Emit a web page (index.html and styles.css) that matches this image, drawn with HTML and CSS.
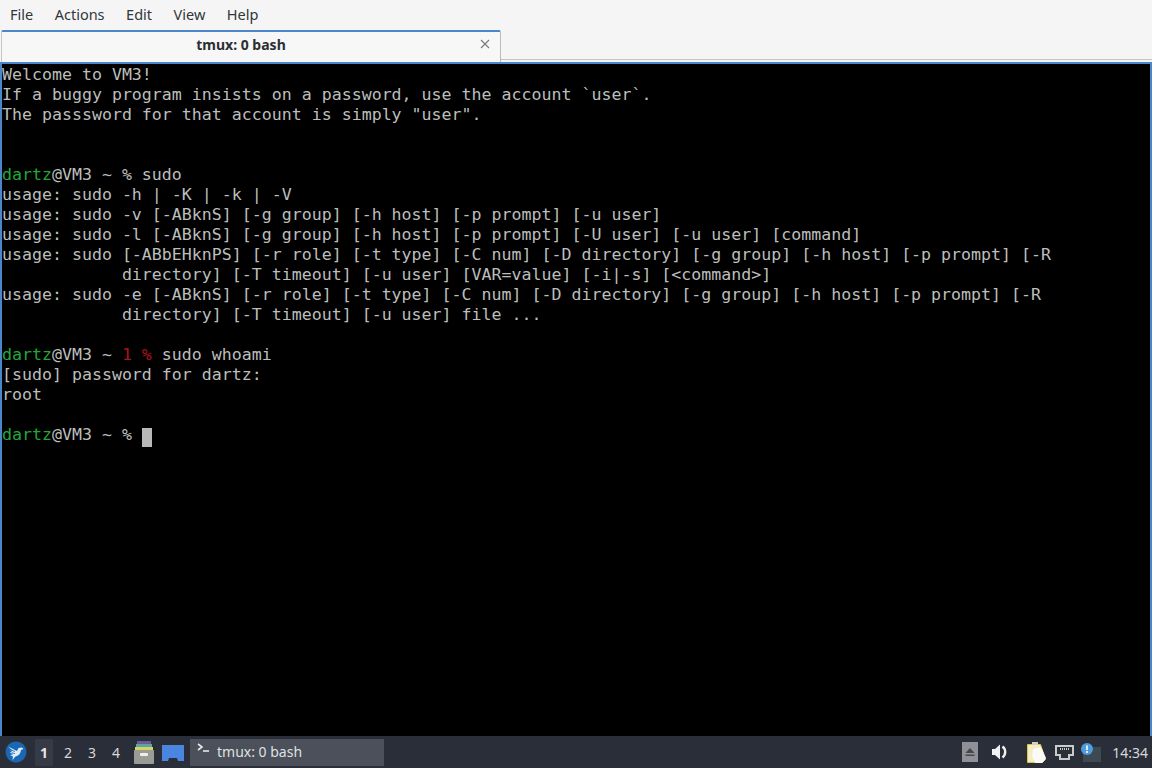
FILE: index.html
```html
<!DOCTYPE html>
<html lang="en">
<head>
<meta charset="utf-8">
<title>tmux: 0 bash</title>
<link rel="stylesheet" href="styles.css">
</head>
<body>
<div class="window">
  <nav class="menubar">
    <span class="menu-item">File</span>
    <span class="menu-item">Actions</span>
    <span class="menu-item">Edit</span>
    <span class="menu-item">View</span>
    <span class="menu-item">Help</span>
  </nav>
  <div class="tabbar">
    <div class="tab">
      <span class="tab-title">tmux: 0 bash</span>
      <svg class="tab-close" width="10" height="10" viewBox="0 0 10 10"><path d="M1 1l8 8M9 1l-8 8" stroke="#77797b" stroke-width="1.1" fill="none"/></svg>
    </div>
    <div class="tab-rest"></div>
  </div>
  <main class="terminal"><pre class="screen">Welcome to VM3!
If a buggy program insists on a password, use the account `user`.
The passsword for that account is simply "user".


<span class="green">dartz</span>@VM3 ~ % sudo
usage: sudo -h | -K | -k | -V
usage: sudo -v [-ABknS] [-g group] [-h host] [-p prompt] [-u user]
usage: sudo -l [-ABknS] [-g group] [-h host] [-p prompt] [-U user] [-u user] [command]
usage: sudo [-ABbEHknPS] [-r role] [-t type] [-C num] [-D directory] [-g group] [-h host] [-p prompt] [-R
            directory] [-T timeout] [-u user] [VAR=value] [-i|-s] [&lt;command&gt;]
usage: sudo -e [-ABknS] [-r role] [-t type] [-C num] [-D directory] [-g group] [-h host] [-p prompt] [-R
            directory] [-T timeout] [-u user] file ...

<span class="green">dartz</span>@VM3 ~ <span class="red">1 %</span> sudo whoami
[sudo] password for dartz:
root

<span class="green">dartz</span>@VM3 ~ % <span class="cursor"> </span></pre></main>
</div>
<footer class="taskbar">
  <svg class="logo" width="24" height="24" viewBox="0 0 24 24">
    <circle cx="12" cy="12" r="10.500" fill="#1a68b4"/>
    <path d="M4 6.500l6 3 3 1.500 1.500-3 3.500-.5 1.500 1.500-2.500 1c-.5 4-2.500 6-5.500 6.500l-3 3.500 .5-3.500-3-1.500 3-.5-3.500-2.500 3.500 .5-3-2 3 .5z" fill="#dcebf7"/>
    <path d="M7 10l4 1.500M8 13l3 .5" stroke="#1a68b4" stroke-width=".8"/>
  </svg>
  <div class="pager">
    <span class="desk active">1</span>
    <span class="desk">2</span>
    <span class="desk">3</span>
    <span class="desk">4</span>
  </div>
  <svg class="cabinet" width="20" height="23" viewBox="0 0 20 23">
    <path d="M3 0h14v5H3z" fill="#6a5a9c"/>
    <path d="M2 3h16v4H2z" fill="#5aa6a0"/>
    <path d="M1 6h18v4H1z" fill="#d8d264"/>
    <rect x="0" y="9" width="20" height="14" rx="1" fill="#9c9c96"/>
    <rect x="6" y="12" width="8" height="3" rx="1" fill="#eeeeea"/>
  </svg>
  <svg class="folder" width="22" height="16" viewBox="0 0 22 16">
    <path d="M0 0h22v16h-6l-1-3H7l-1 3H0z" fill="#4a86e0"/>
  </svg>
  <div class="task">
    <svg class="task-icon" width="14" height="12" viewBox="0 0 14 12"><path d="M1 1l4 3-4 3" stroke="#e6e8ea" stroke-width="1.600" fill="none"/><path d="M6 8h6" stroke="#e6e8ea" stroke-width="1.600"/></svg>
    <span>tmux: 0 bash</span>
  </div>
  <div class="tray">
    <span class="eject"><svg width="16" height="20" viewBox="0 0 16 20"><path d="M8 6l4.500 5h-9z" fill="#44474c"/><path d="M3.500 12.500h9v1.500h-9z" fill="#44474c"/></svg></span>
    <svg class="speaker" width="18" height="18" viewBox="0 0 18 18"><path d="M1 6h3l5-4.500v15L4 12H1z" fill="#f2f2f2"/><path d="M11.500 3.500a7 7 0 0 1 0 11" stroke="#f2f2f2" stroke-width="2.400" fill="none"/></svg>
    <svg class="clip" width="20" height="21" viewBox="0 0 20 21"><path d="M.5 2.500h13l5 15-3 3H.5z" fill="#f3ecc4" stroke="#d8c93c"/><path d="M5 0h6v3H5z" fill="#cfcfc6"/><path d="M6 7l8-2 5 11-4 5H8l-3-7z" fill="#fafaf6"/></svg>
    <svg class="net" width="19" height="15" viewBox="0 0 19 15"><path d="M1 1h17v9h-4v4H5v-4H1z" fill="#2b2f36" stroke="#c8cacb" stroke-width="2"/><path d="M5 4h9" stroke="#c8cacb" stroke-dasharray="1 1" stroke-width="2"/></svg>
    <svg class="notice" width="20" height="19" viewBox="0 0 20 19"><rect x="2" y="4" width="18" height="15" fill="#3d4a52"/><circle cx="6" cy="6" r="6" fill="#4f9bdc"/><path d="M6 2.500v4.500M6 8v2" stroke="#fff" stroke-width="1.600"/></svg>
    <span class="clock">14:34</span>
  </div>
</footer>
</body>
</html>
```
FILE: styles.css
```css
* { box-sizing: border-box; }
html, body { margin: 0; padding: 0; }
body {
  width: 1152px;
  height: 768px;
  overflow: hidden;
  display: flex;
  flex-direction: column;
  font-family: "Noto Sans", "Open Sans", sans-serif;
  background: #f5f5f5;
}
.window { flex: 1; display: flex; flex-direction: column; min-height: 0; }
.menubar {
  height: 30px;
  display: flex;
  align-items: center;
  gap: 21.500px;
  padding: 0 0 2px 10px;
  font-size: 14.500px;
  color: #31363b;
  background: #f5f5f5;
}
.tabbar {
  height: 32px;
  display: flex;
  align-items: flex-end;
  background: #f5f5f5;
}
.tab {
  width: 500px;
  height: 32px;
  margin-left: 1px;
  padding: 0 20px 5px 0;
  display: flex;
  align-items: center;
  justify-content: center;
  position: relative;
  background: #f7f7f7;
  border-top: 2px solid #4a86c8;
  border-left: 1px solid #c4c6c8;
  border-right: 1px solid #b8babc;
  border-radius: 2px 2px 0 0;
  font-size: 14px;
  font-weight: 700;
  color: #2b2f33;
}
.tab-close { position: absolute; right: 10px; top: 7px; }
.tab-rest { flex: 1; height: 3px; border-top: 1px solid #c4c6c8; background: #f5f5f5; }
.terminal {
  flex: 1;
  min-height: 0;
  background: #000;
  border-top: 2px solid #4a86c8;
  border-left: 2px solid #4a86c8;
  border-right: 2px solid #4a86c8;
}
.screen {
  margin: 0;
  padding-top: 1px;
  font-family: "DejaVu Sans Mono", "Liberation Mono", monospace;
  font-size: 16.600px;
  line-height: 20px;
  color: #bcbebc;
}
.green { color: #22a83a; }
.red { color: #a8141c; }
.cursor { display: inline-block; width: 10px; height: 19px; background: #b8b8b8; vertical-align: -3px; }
.taskbar {
  height: 32px;
  flex: none;
  display: flex;
  align-items: center;
  padding-top: 1px;
  background: #2a2e38;
  color: #d6d8da;
  font-size: 14px;
}
.logo { margin-left: 4px; flex: none; position: relative; top: -1px; }
.pager { display: flex; gap: 6px; margin-left: 7px; margin-right: 9px; }
.desk {
  width: 18px;
  height: 27px;
  padding-bottom: 1px;
  display: flex;
  align-items: center;
  justify-content: center;
  font-size: 14px;
}
.desk.active { background: #353a44; font-weight: 700; color: #e4e6e8; }
.cabinet { flex: none; margin-right: 8px; }
.folder { flex: none; margin-right: 6px; }
.task {
  width: 194px;
  height: 27px;
  display: flex;
  align-items: center;
  gap: 6px;
  padding: 0 0 2px 7px;
  background: #4b505a;
  color: #dfe1e3;
  font-size: 14px;
}
.task-icon { position: relative; top: -3px; flex: none; }
.tray { margin-left: auto; display: flex; align-items: center; padding-bottom: 1px; }
.eject { width: 16px; height: 20px; background: #8f9196; margin-right: 13px; display: flex; }
.speaker { margin-right: 18px; }
.clip { margin-right: 8px; }
.net { margin-right: 7px; }
.notice { margin-right: 11px; }
.clock { margin-right: 4px; color: #d6d8da; font-size: 14px; }
```
